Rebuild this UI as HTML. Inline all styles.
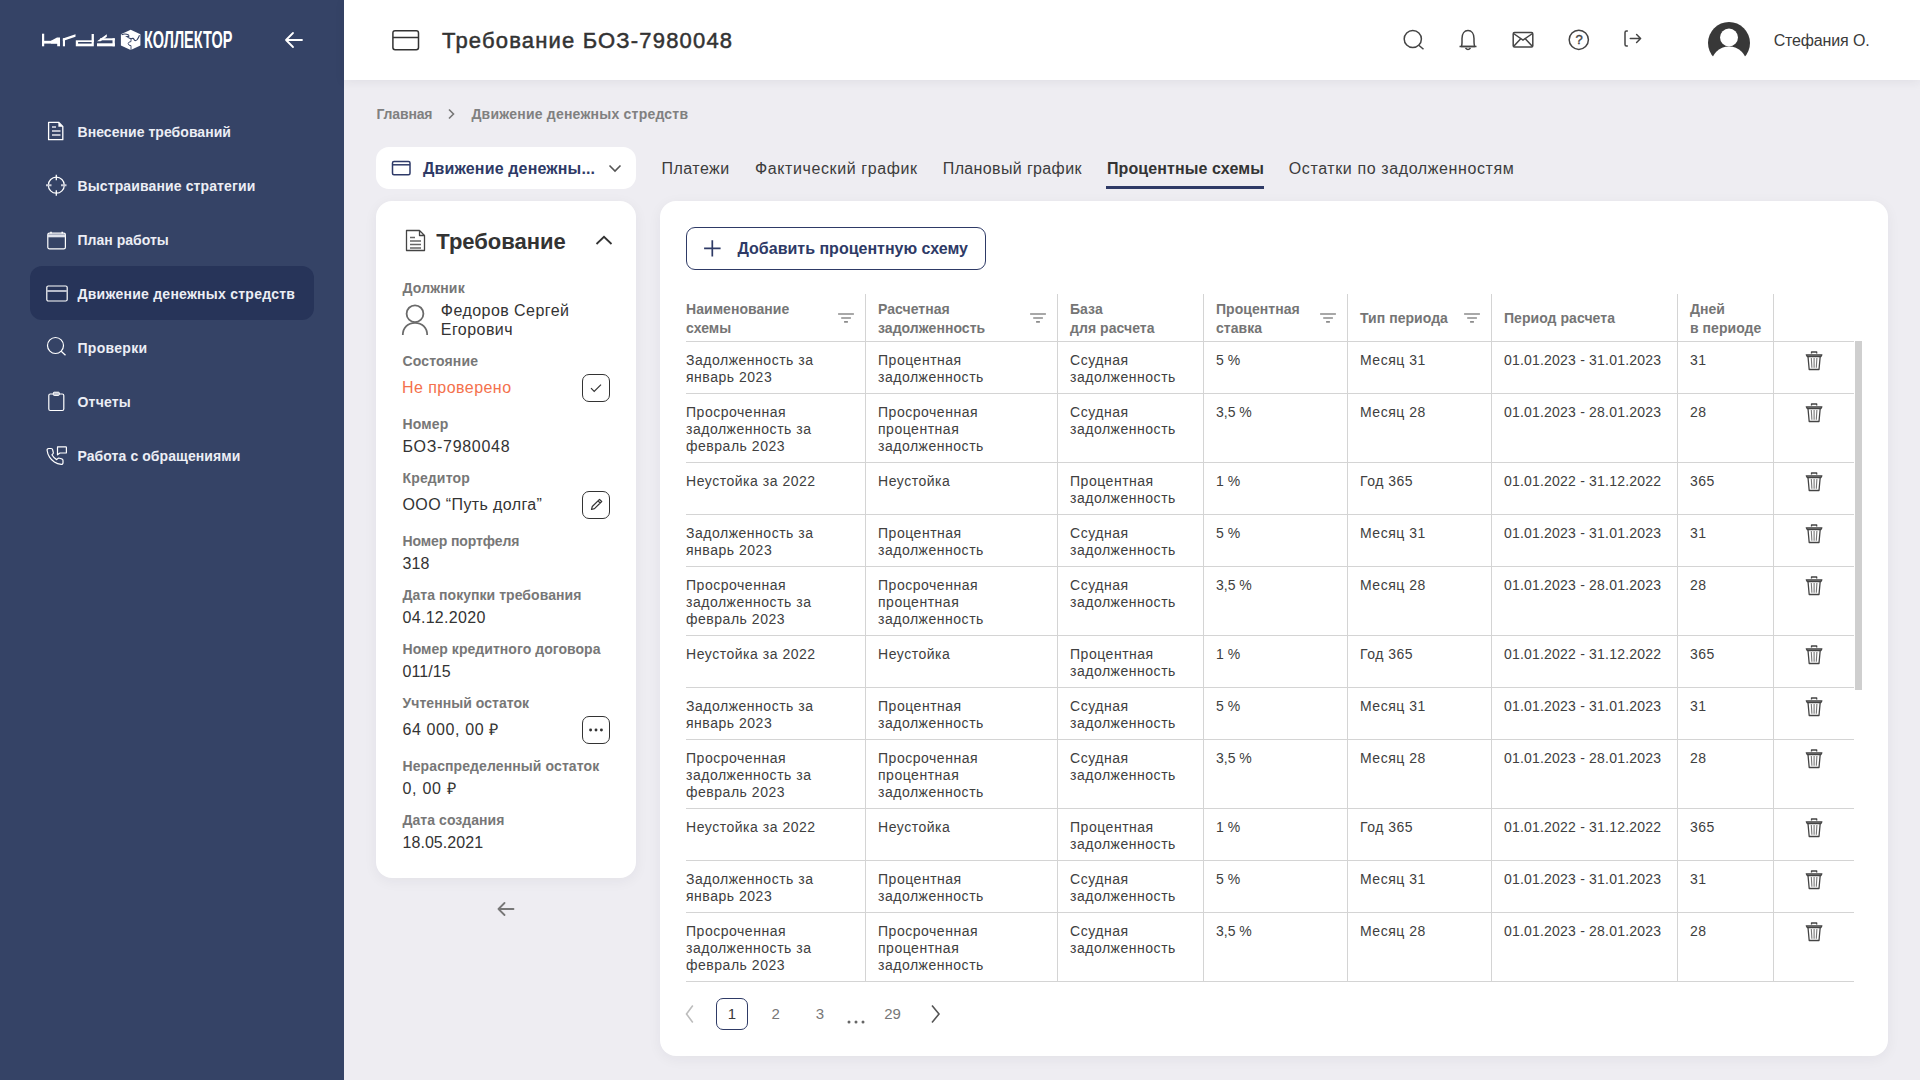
<!DOCTYPE html>
<html><head><meta charset="utf-8"><title>Требование БОЗ-7980048</title>
<style>
html,body{margin:0;padding:0}
body{width:1920px;height:1080px;overflow:hidden;position:relative;background:#EEEDF2;font-family:"Liberation Sans",sans-serif}
.t{position:absolute;white-space:nowrap;line-height:20px}
svg{overflow:visible}
</style></head><body>
<div style="position:absolute;left:0;top:0;width:344px;height:1080px;background:#354366"></div>
<svg style="position:absolute;left:0;top:0" width="344" height="80" viewBox="0 0 344 80">
<g fill="#fff">
<rect x="42" y="33.7" width="2.2" height="12.6"/>
<rect x="44" y="40.8" width="16" height="2.8"/>
<polygon points="51,40.8 57,37.6 60,37.6 60,46.3 57.2,46.3 57.2,43.6 51,43.6"/>
<rect x="62.9" y="38.3" width="2.1" height="8"/>
<polygon points="62.9,38.5 75.5,34.2 75.5,36.8 62.9,41"/>
<rect x="75.8" y="40.3" width="18" height="6"/>
<rect x="91.6" y="34" width="2.3" height="8"/>
<polygon points="97,41.2 106.8,34.3 106.8,36.8 100.5,41.2"/>
<rect x="97" y="43.3" width="17.8" height="3"/>
<rect x="100" y="38.3" width="14.8" height="2"/>
<rect x="112.5" y="38.3" width="2.3" height="8"/>
</g>
<rect x="78.1" y="42" width="13.5" height="1.6" fill="#354366"/>
<g>
<polygon points="130.7,29.8 140.4,34.2 140.4,45.5 130.7,50 120.9,45.5 120.9,34.2" fill="#fff"/>
<path d="M121.6,34.8 Q125,33 128.5,35 Q130,36.8 127,36.6 Q129.2,38.2 131,38.8 Q133.6,37.6 134,39.6 Q135,41.6 137.2,39.6 Q138.6,37.6 139.5,35.2" stroke="#354366" stroke-width="1.1" fill="none"/>
<path d="M131,38.8 V41.6 Q128.6,41.4 128.2,43.6 Q128.4,45.8 131,45.6 V50.5" stroke="#354366" stroke-width="0.9" fill="none"/>
</g>
</svg>
<div class="t" style="left:144px;top:28px;font-size:23px;font-weight:700;color:#fff;line-height:24px;transform:scaleX(0.63);transform-origin:0 0;letter-spacing:0">КОЛЛЕКТОР</div>
<svg style="position:absolute;left:280px;top:26px" width="28" height="28" viewBox="0 0 28 28">
<path d="M6,14 H22 M13,7 L6,14 L13,21" stroke="#fff" stroke-width="1.8" fill="none" stroke-linecap="round" stroke-linejoin="round"/></svg>
<div style="position:absolute;left:30px;top:266px;width:284px;height:54px;border-radius:12px;background:#273459"></div>
<div class="t" style="left:77.5px;top:121.5px;font-size:14px;font-weight:700;color:#ECEEF5;letter-spacing:0.05px;">Внесение требований</div>
<svg style="position:absolute;left:46px;top:116.0px" width="22" height="22" viewBox="0 0 22 22" fill="none" stroke="#fff" stroke-width="1.2" stroke-linejoin="round"><path d="M2.6,6.3 H12.6 L16.8,10.5 V23.7 H2.6 Z" stroke-width="1.3"/><path d="M12.4,6.3 L16.8,10.7 H12.4 Z" fill="#fff" stroke="none"/><path d="M6,11 H10 M6,15 H14.5 M6,18.9 H14.5" stroke="#B8BCCB" stroke-width="2"/></svg>
<div class="t" style="left:77.5px;top:175.5px;font-size:14px;font-weight:700;color:#ECEEF5;letter-spacing:0.12px;">Выстраивание стратегии</div>
<svg style="position:absolute;left:46px;top:174.5px" width="22" height="22" viewBox="0 0 22 22" fill="none" stroke="#fff" stroke-width="1.2" stroke-linejoin="round"><circle cx="10.3" cy="10.2" r="8"/><path d="M10.3,-0.3 V5.2 M10.3,15.2 V20.7" stroke-width="1.3"/><path d="M0,10.2 H5.5 M15,10.2 H20.5" stroke-width="2" stroke="#C9CCD8"/></svg>
<div class="t" style="left:77.5px;top:229.5px;font-size:14px;font-weight:700;color:#ECEEF5;letter-spacing:0.02px;">План работы</div>
<svg style="position:absolute;left:46px;top:229.5px" width="22" height="22" viewBox="0 0 22 22" fill="none" stroke="#fff" stroke-width="1.2" stroke-linejoin="round"><rect x="1.8" y="3.2" width="17.6" height="15.6" rx="1.6"/><path d="M1.8,5.8 H19.4" stroke-width="3" stroke="#E0E3EC"/><path d="M5,1.8 V3.5 M16.2,1.8 V3.5" stroke-width="1.5"/></svg>
<div class="t" style="left:77.5px;top:283.5px;font-size:14px;font-weight:700;color:#ECEEF5;letter-spacing:0.25px;">Движение денежных стредств</div>
<svg style="position:absolute;left:46px;top:284.0px" width="22" height="22" viewBox="0 0 22 22" fill="none" stroke="#fff" stroke-width="1.2" stroke-linejoin="round"><rect x="0.8" y="2" width="20.4" height="15" rx="1.5"/><path d="M0.8,7 H21.2" stroke-width="2" stroke="#B8BCCB"/></svg>
<div class="t" style="left:77.5px;top:337.5px;font-size:14px;font-weight:700;color:#ECEEF5;letter-spacing:0.3px;">Проверки</div>
<svg style="position:absolute;left:46px;top:336.3px" width="22" height="22" viewBox="0 0 22 22" fill="none" stroke="#fff" stroke-width="1.2" stroke-linejoin="round"><circle cx="9.5" cy="9.5" r="8"/><path d="M15.2,15.2 L19.5,19.3"/></svg>
<div class="t" style="left:77.5px;top:391.5px;font-size:14px;font-weight:700;color:#ECEEF5;letter-spacing:0.2px;">Отчеты</div>
<svg style="position:absolute;left:46px;top:389.5px" width="22" height="22" viewBox="0 0 22 22" fill="none" stroke="#fff" stroke-width="1.2" stroke-linejoin="round"><rect x="2.8" y="4" width="15" height="16.5" rx="1.5"/><rect x="7.3" y="2.2" width="6" height="3.2" rx="0.8" fill="#BFC3D0" stroke-width="1"/></svg>
<div class="t" style="left:77.5px;top:445.5px;font-size:14px;font-weight:700;color:#ECEEF5;letter-spacing:0.08px;">Работа с обращениями</div>
<svg style="position:absolute;left:46px;top:443.5px" width="22" height="22" viewBox="0 0 22 22" fill="none" stroke="#fff" stroke-width="1.2" stroke-linejoin="round"><g transform="translate(-0.6,2.9) scale(0.8)"><path stroke-width="1.5" d="M22 16.92v3a2 2 0 0 1-2.18 2 19.79 19.79 0 0 1-8.63-3.07 19.5 19.5 0 0 1-6-6 19.790 19.79 0 0 1-3.07-8.67A2 2 0 0 1 4.110 2h3a2 2 0 0 1 2 1.72 12.84 12.84 0 0 0 .7 2.81 2 2 0 0 1-.45 2.11L8.09 9.91a16 16 0 0 0 6 6l1.270-1.27a2 2 0 0 1 2.11-.45 12.84 12.84 0 0 0 2.81.7A2 2 0 0 1 22 16.92z"/></g><path d="M11.5,2.8 H19.8 Q20.4,2.8 20.4,3.4 V8.4 Q20.4,9 19.8,9 H14 L11.5,10.8 V3.4 Q11.5,2.8 12.1,2.8 Z"/></svg>
<div style="position:absolute;left:344px;top:0;width:1576px;height:80px;background:#fff;box-shadow:0 2px 10px rgba(40,40,60,0.07)"></div>
<svg style="position:absolute;left:390px;top:28px" width="32" height="24" viewBox="0 0 32 24" fill="none" stroke="#333" stroke-width="1.5"><rect x="2.9" y="2.7" width="25.6" height="19" rx="2.2"/><path d="M3,9.5 H28.5"/></svg>
<div class="t" style="left:442px;top:30.799999999999997px;font-size:22px;font-weight:400;color:#333;letter-spacing:1.18px;-webkit-text-stroke:0.5px #333;">Требование БОЗ-7980048</div>
<svg style="position:absolute;left:1395px;top:22px" width="260" height="36" viewBox="1395 22 260 36" fill="none" stroke="#444" stroke-width="1.5">
<circle cx="1412.8" cy="39" r="8.6"/><path d="M1418.8,45.2 L1423.5,49.2"/>
<path d="M1461.3,46.5 C1462.3,45 1462,41 1462,38.5 C1462,33.5 1464.5,30.5 1468,30.5 C1471.5,30.5 1474,33.5 1474,38.5 C1474,41 1473.8,45 1474.8,46.5 Z" stroke-linejoin="round"/>
<path d="M1459.5,46.5 H1476.5"/><path d="M1465.5,48 q2.5,3 5,0"/>
<rect x="1513.2" y="32.6" width="19.6" height="14.4" rx="1.3"/><path d="M1513.5,33.5 L1523,40 L1532.5,33.5 M1513.5,46.5 L1520.5,39 M1532.5,46.5 L1525.5,39"/>
<circle cx="1578.8" cy="39.8" r="9.6"/>
<path d="1576,34 " />
<path d="M1627.3,31 H1626.5 Q1625,31 1625,32.5 V44.6 Q1625,46.1 1626.5,46.1 H1627.3 M1630.3,38.5 H1640.6 M1636.6,34.5 L1640.6,38.5 L1636.6,42.5" stroke-linecap="round" stroke-linejoin="round"/>
</svg>
<div class="t" style="left:1572px;top:30px;width:14px;text-align:center;font-size:13px;font-weight:400;color:#444;line-height:20px;-webkit-text-stroke:0.4px #444">?</div>
<svg style="position:absolute;left:1700px;top:16px" width="60" height="50" viewBox="1700 16 60 50">
<circle cx="1729" cy="43" r="21" fill="#383838"/>
<defs><clipPath id="avb"><rect x="1700" y="16" width="60" height="48"/></clipPath></defs><circle cx="1729" cy="37.5" r="9" fill="#fff"/><circle cx="1729" cy="64.5" r="18" fill="#fff" clip-path="url(#avb)"/>
</svg>
<div class="t" style="left:1773.7px;top:30.5px;font-size:16px;font-weight:400;color:#3a3a3a;letter-spacing:-0.15px;">Стефания О.</div>
<div class="t" style="left:376.5px;top:103.5px;font-size:14px;font-weight:700;color:#808080;letter-spacing:-0.15px;">Главная</div>
<svg style="position:absolute;left:444px;top:106px" width="14" height="16" viewBox="0 0 14 16" fill="none" stroke="#777" stroke-width="1.6"><path d="M5,3.5 L9.5,8 L5,12.5"/></svg>
<div class="t" style="left:471.4px;top:103.5px;font-size:14px;font-weight:700;color:#808080;letter-spacing:0.22px;">Движение денежных стредств</div>
<div style="position:absolute;left:376px;top:147px;width:260px;height:42px;border-radius:13px;background:#fff"></div>
<svg style="position:absolute;left:390px;top:159px" width="24" height="18" viewBox="0 0 24 18" fill="none" stroke="#2E3A68" stroke-width="1.5"><rect x="2.5" y="2.5" width="17.5" height="13.2" rx="1.5"/><path d="M2.5,5.8 H20"/></svg>
<div class="t" style="left:423px;top:159px;font-size:16px;font-weight:700;color:#2E3A66;letter-spacing:0.15px;">Движение денежны...</div>
<svg style="position:absolute;left:606px;top:161px" width="18" height="14" viewBox="0 0 18 14" fill="none" stroke="#555" stroke-width="1.6"><path d="M3.5,4.5 L9,10 L14.5,4.5"/></svg>
<div class="t" style="left:661.6px;top:158.7px;font-size:16px;font-weight:400;color:#3c3c3c;letter-spacing:0.44px;">Платежи</div>
<div class="t" style="left:755px;top:158.7px;font-size:16px;font-weight:400;color:#3c3c3c;letter-spacing:0.6px;">Фактический график</div>
<div class="t" style="left:942.8px;top:158.7px;font-size:16px;font-weight:400;color:#3c3c3c;letter-spacing:0.36px;">Плановый график</div>
<div class="t" style="left:1107px;top:158.7px;font-size:16px;font-weight:700;color:#333;letter-spacing:0.1px;">Процентные схемы</div>
<div class="t" style="left:1288.8px;top:158.7px;font-size:16px;font-weight:400;color:#3c3c3c;letter-spacing:0.6px;">Остатки по задолженностям</div>
<div style="position:absolute;left:1106px;top:185.5px;width:158px;height:3.3px;background:#2E3A66"></div>
<div style="position:absolute;left:376px;top:201px;width:260px;height:677px;border-radius:16px;background:#fff;box-shadow:0 3px 14px rgba(30,30,60,0.055)"></div>
<svg style="position:absolute;left:404px;top:228px" width="24" height="26" viewBox="0 0 24 26" fill="none" stroke="#444" stroke-width="1.3" stroke-linejoin="round"><path d="M2.5,2.5 H15.5 L20.5,7.5 V22.5 H2.5 Z M15.5,2.5 V7.5 H20.5"/><path d="M6,9.5 H11 M6,13 H17 M6,16.5 H17 M6,20 H17" stroke="#666"/></svg>
<div class="t" style="left:436.3px;top:232.2px;font-size:22px;font-weight:700;color:#333;letter-spacing:0px;">Требование</div>
<svg style="position:absolute;left:592px;top:232px" width="24" height="16" viewBox="0 0 24 16" fill="none" stroke="#333" stroke-width="1.8"><path d="M4.5,12 L12,4.8 L19.5,12"/></svg>
<div class="t" style="left:402.5px;top:278.3px;font-size:14px;font-weight:700;color:#777777;letter-spacing:0.15px;">Должник</div>
<svg style="position:absolute;left:400px;top:303px" width="32" height="34" viewBox="0 0 32 34" fill="none" stroke="#6a6a6a" stroke-width="1.8"><circle cx="15" cy="10.7" r="8.4"/><path d="M2.8,32 C2.8,24.5 8,19.8 15,19.8 C22,19.8 27.2,24.5 27.2,32"/></svg>
<div class="t" style="left:440.8px;top:301.2px;font-size:16px;font-weight:400;color:#333;letter-spacing:0.45px;">Федоров Сергей</div>
<div class="t" style="left:440.8px;top:320.2px;font-size:16px;font-weight:400;color:#333;letter-spacing:0.45px;">Егорович</div>
<div class="t" style="left:402.5px;top:351.3px;font-size:14px;font-weight:700;color:#777777;letter-spacing:0.15px;">Состояние</div>
<div class="t" style="left:402px;top:378.3px;font-size:16px;font-weight:400;color:#F4714C;letter-spacing:0.45px;">Не проверено</div>
<div style="position:absolute;left:582px;top:374px;width:26px;height:26px;border:1.2px solid #333;border-radius:7px"></div><svg style="position:absolute;left:582px;top:374px" width="28" height="28" viewBox="0 0 28 28" fill="none" stroke="#333" stroke-width="1.2"><path d="M9,14.2 L12.2,17.4 L19,10.6"/></svg>
<div class="t" style="left:402.5px;top:414.2px;font-size:14px;font-weight:700;color:#777777;letter-spacing:0.15px;">Номер</div>
<div class="t" style="left:402.5px;top:436.7px;font-size:16px;font-weight:400;color:#333;letter-spacing:0.7px;">БОЗ-7980048</div>
<div class="t" style="left:402.5px;top:468px;font-size:14px;font-weight:700;color:#777777;letter-spacing:0.15px;">Кредитор</div>
<div class="t" style="left:402.5px;top:495.3px;font-size:16px;font-weight:400;color:#333;letter-spacing:0.38px;">ООО “Путь долга”</div>
<div style="position:absolute;left:582px;top:491.3px;width:26px;height:26px;border:1.2px solid #333;border-radius:7px"></div><svg style="position:absolute;left:582px;top:491.3px" width="28" height="28" viewBox="0 0 28 28" fill="none" stroke="#333" stroke-width="1.2"><path d="M9.5,18.5 L10.3,15.5 L17.5,8.3 L19.7,10.5 L12.5,17.7 Z M16,9.8 L18.2,12" stroke-linejoin="round"/></svg>
<div class="t" style="left:402.5px;top:531.2px;font-size:14px;font-weight:700;color:#777777;letter-spacing:-0.1px;">Номер портфеля</div>
<div class="t" style="left:402.5px;top:553.7px;font-size:16px;font-weight:400;color:#333;letter-spacing:0.1px;">318</div>
<div class="t" style="left:402.5px;top:585px;font-size:14px;font-weight:700;color:#777777;letter-spacing:0.05px;">Дата покупки требования</div>
<div class="t" style="left:402.5px;top:607.8px;font-size:16px;font-weight:400;color:#333;letter-spacing:0.3px;">04.12.2020</div>
<div class="t" style="left:402.5px;top:638.8px;font-size:14px;font-weight:700;color:#777777;letter-spacing:0.05px;">Номер кредитного договора</div>
<div class="t" style="left:402.5px;top:661.7px;font-size:16px;font-weight:400;color:#333;letter-spacing:0.1px;">011/15</div>
<div class="t" style="left:402.5px;top:693px;font-size:14px;font-weight:700;color:#777777;letter-spacing:0.05px;">Учтенный остаток</div>
<div class="t" style="left:402.5px;top:720px;font-size:16px;font-weight:400;color:#333;letter-spacing:0.6px;">64 000, 00 ₽</div>
<div style="position:absolute;left:582px;top:716.3px;width:26px;height:26px;border:1.2px solid #333;border-radius:7px"></div><svg style="position:absolute;left:582px;top:716.3px" width="28" height="28" viewBox="0 0 28 28" fill="none" stroke="#333" stroke-width="1.2"><circle cx="8.6" cy="14" r="1.45" fill="#333" stroke="none"/><circle cx="14" cy="14" r="1.45" fill="#333" stroke="none"/><circle cx="19.4" cy="14" r="1.45" fill="#333" stroke="none"/></svg>
<div class="t" style="left:402.5px;top:756.2px;font-size:14px;font-weight:700;color:#777777;letter-spacing:0.1px;">Нераспределенный остаток</div>
<div class="t" style="left:402.5px;top:778.7px;font-size:16px;font-weight:400;color:#333;letter-spacing:0.7px;">0, 00 ₽</div>
<div class="t" style="left:402.5px;top:810px;font-size:14px;font-weight:700;color:#777777;letter-spacing:0.05px;">Дата создания</div>
<div class="t" style="left:402.5px;top:832.5px;font-size:16px;font-weight:400;color:#333;letter-spacing:0.05px;">18.05.2021</div>
<svg style="position:absolute;left:494px;top:898px" width="24" height="22" viewBox="0 0 24 22" fill="none" stroke="#777" stroke-width="1.8" stroke-linecap="round" stroke-linejoin="round"><path d="M4.5,11 H19.5 M10.5,5 L4.5,11 L10.5,17"/></svg>
<div style="position:absolute;left:660px;top:201px;width:1228px;height:855px;border-radius:16px;background:#fff;box-shadow:0 3px 14px rgba(30,30,60,0.055)"></div>
<div style="position:absolute;left:686px;top:227px;width:298px;height:40.6px;border:1.4px solid #2E3A66;border-radius:9px"></div>
<svg style="position:absolute;left:702px;top:238px" width="20" height="20" viewBox="0 0 20 20" fill="none" stroke="#2E3A66" stroke-width="1.7"><path d="M10.3,2.3 V18.6 M2.1,10.4 H18.6"/></svg>
<div class="t" style="left:737.5px;top:238.9px;font-size:16px;font-weight:700;color:#2E3A66;letter-spacing:0px;">Добавить процентную схему</div>
<div style="position:absolute;left:865.0px;top:294px;width:1px;height:687.5px;background:#D4D4D4"></div>
<div style="position:absolute;left:1057.0px;top:294px;width:1px;height:687.5px;background:#D4D4D4"></div>
<div style="position:absolute;left:1203.0px;top:294px;width:1px;height:687.5px;background:#D4D4D4"></div>
<div style="position:absolute;left:1347.0px;top:294px;width:1px;height:687.5px;background:#D4D4D4"></div>
<div style="position:absolute;left:1491.0px;top:294px;width:1px;height:687.5px;background:#D4D4D4"></div>
<div style="position:absolute;left:1677.0px;top:294px;width:1px;height:687.5px;background:#D4D4D4"></div>
<div style="position:absolute;left:1773.0px;top:294px;width:1px;height:687.5px;background:#D4D4D4"></div>
<div style="position:absolute;left:686px;top:340.5px;width:1168px;height:1px;background:#D4D4D4"></div>
<div style="position:absolute;left:686px;top:392.5px;width:1168px;height:1px;background:#D4D4D4"></div>
<div style="position:absolute;left:686px;top:461.5px;width:1168px;height:1px;background:#D4D4D4"></div>
<div style="position:absolute;left:686px;top:513.5px;width:1168px;height:1px;background:#D4D4D4"></div>
<div style="position:absolute;left:686px;top:565.5px;width:1168px;height:1px;background:#D4D4D4"></div>
<div style="position:absolute;left:686px;top:634.5px;width:1168px;height:1px;background:#D4D4D4"></div>
<div style="position:absolute;left:686px;top:686.5px;width:1168px;height:1px;background:#D4D4D4"></div>
<div style="position:absolute;left:686px;top:738.5px;width:1168px;height:1px;background:#D4D4D4"></div>
<div style="position:absolute;left:686px;top:807.5px;width:1168px;height:1px;background:#D4D4D4"></div>
<div style="position:absolute;left:686px;top:859.5px;width:1168px;height:1px;background:#D4D4D4"></div>
<div style="position:absolute;left:686px;top:911.5px;width:1168px;height:1px;background:#D4D4D4"></div>
<div style="position:absolute;left:686px;top:980.5px;width:1168px;height:1px;background:#D4D4D4"></div>
<div class="t" style="left:686px;top:298.7px;font-size:14px;font-weight:700;color:#757575;letter-spacing:0.05px;">Наименование</div>
<div class="t" style="left:686px;top:317.9px;font-size:14px;font-weight:700;color:#757575;letter-spacing:0.05px;">схемы</div>
<svg style="position:absolute;left:836.0px;top:310px" width="20" height="16" viewBox="0 0 20 16" fill="none" stroke="#8c8c8c" stroke-width="1.7"><path d="M2.1,4 H17.9 M5.2,8 H14.9 M8.1,11.9 H11.9"/></svg>
<div class="t" style="left:878.0px;top:298.7px;font-size:14px;font-weight:700;color:#757575;letter-spacing:0.05px;">Расчетная</div>
<div class="t" style="left:878.0px;top:317.9px;font-size:14px;font-weight:700;color:#757575;letter-spacing:0.05px;">задолженность</div>
<svg style="position:absolute;left:1028.0px;top:310px" width="20" height="16" viewBox="0 0 20 16" fill="none" stroke="#8c8c8c" stroke-width="1.7"><path d="M2.1,4 H17.9 M5.2,8 H14.9 M8.1,11.9 H11.9"/></svg>
<div class="t" style="left:1070.0px;top:298.7px;font-size:14px;font-weight:700;color:#757575;letter-spacing:0.05px;">База</div>
<div class="t" style="left:1070.0px;top:317.9px;font-size:14px;font-weight:700;color:#757575;letter-spacing:0.05px;">для расчета</div>
<div class="t" style="left:1216.0px;top:298.7px;font-size:14px;font-weight:700;color:#757575;letter-spacing:0.05px;">Процентная</div>
<div class="t" style="left:1216.0px;top:317.9px;font-size:14px;font-weight:700;color:#757575;letter-spacing:0.05px;">ставка</div>
<svg style="position:absolute;left:1318.0px;top:310px" width="20" height="16" viewBox="0 0 20 16" fill="none" stroke="#8c8c8c" stroke-width="1.7"><path d="M2.1,4 H17.9 M5.2,8 H14.9 M8.1,11.9 H11.9"/></svg>
<div class="t" style="left:1360.0px;top:308.3px;font-size:14px;font-weight:700;color:#757575;letter-spacing:0.05px;">Тип периода</div>
<svg style="position:absolute;left:1462.0px;top:310px" width="20" height="16" viewBox="0 0 20 16" fill="none" stroke="#8c8c8c" stroke-width="1.7"><path d="M2.1,4 H17.9 M5.2,8 H14.9 M8.1,11.9 H11.9"/></svg>
<div class="t" style="left:1504.0px;top:308.3px;font-size:14px;font-weight:700;color:#757575;letter-spacing:0.05px;">Период расчета</div>
<div class="t" style="left:1690.0px;top:298.7px;font-size:14px;font-weight:700;color:#757575;letter-spacing:0.05px;">Дней</div>
<div class="t" style="left:1690.0px;top:317.9px;font-size:14px;font-weight:700;color:#757575;letter-spacing:0.05px;">в периоде</div>
<div class="t" style="left:686px;top:350.2px;font-size:14px;font-weight:400;color:#404040;letter-spacing:0.52px;">Задолженность за</div>
<div class="t" style="left:686px;top:367.2px;font-size:14px;font-weight:400;color:#404040;letter-spacing:0.52px;">январь 2023</div>
<div class="t" style="left:878.0px;top:350.2px;font-size:14px;font-weight:400;color:#404040;letter-spacing:0.52px;">Процентная</div>
<div class="t" style="left:878.0px;top:367.2px;font-size:14px;font-weight:400;color:#404040;letter-spacing:0.52px;">задолженность</div>
<div class="t" style="left:1070.0px;top:350.2px;font-size:14px;font-weight:400;color:#404040;letter-spacing:0.52px;">Ссудная</div>
<div class="t" style="left:1070.0px;top:367.2px;font-size:14px;font-weight:400;color:#404040;letter-spacing:0.52px;">задолженность</div>
<div class="t" style="left:1216.0px;top:350.2px;font-size:14px;font-weight:400;color:#404040;letter-spacing:0.0px;">5 %</div>
<div class="t" style="left:1360.0px;top:350.2px;font-size:14px;font-weight:400;color:#404040;letter-spacing:0.52px;">Месяц 31</div>
<div class="t" style="left:1504.0px;top:350.2px;font-size:14px;font-weight:400;color:#404040;letter-spacing:0.2px;">01.01.2023 - 31.01.2023</div>
<div class="t" style="left:1690.0px;top:350.2px;font-size:14px;font-weight:400;color:#404040;letter-spacing:0.52px;">31</div>
<svg style="position:absolute;left:1804px;top:349px" width="20" height="22" viewBox="0 0 20 22" fill="none" stroke="#444" stroke-width="1.3" stroke-linejoin="round"><path d="M7.5,4.5 V3 H12.7 V4.5"/><path d="M2.3,5.8 H17.9 L17,7.5 H3.2 Z" fill="#c4c4c4"/><path d="M4,7.5 L5.2,20.5 H15 L16.2,7.5"/><path d="M7.3,9 L7.9,18.8 M10.1,9 V18.8 M12.9,9 L12.3,18.8" stroke="#777" stroke-width="1.1"/></svg>
<div class="t" style="left:686px;top:402.2px;font-size:14px;font-weight:400;color:#404040;letter-spacing:0.52px;">Просроченная</div>
<div class="t" style="left:686px;top:419.2px;font-size:14px;font-weight:400;color:#404040;letter-spacing:0.52px;">задолженность за</div>
<div class="t" style="left:686px;top:436.2px;font-size:14px;font-weight:400;color:#404040;letter-spacing:0.52px;">февраль 2023</div>
<div class="t" style="left:878.0px;top:402.2px;font-size:14px;font-weight:400;color:#404040;letter-spacing:0.52px;">Просроченная</div>
<div class="t" style="left:878.0px;top:419.2px;font-size:14px;font-weight:400;color:#404040;letter-spacing:0.52px;">процентная</div>
<div class="t" style="left:878.0px;top:436.2px;font-size:14px;font-weight:400;color:#404040;letter-spacing:0.52px;">задолженность</div>
<div class="t" style="left:1070.0px;top:402.2px;font-size:14px;font-weight:400;color:#404040;letter-spacing:0.52px;">Ссудная</div>
<div class="t" style="left:1070.0px;top:419.2px;font-size:14px;font-weight:400;color:#404040;letter-spacing:0.52px;">задолженность</div>
<div class="t" style="left:1216.0px;top:402.2px;font-size:14px;font-weight:400;color:#404040;letter-spacing:0.0px;">3,5 %</div>
<div class="t" style="left:1360.0px;top:402.2px;font-size:14px;font-weight:400;color:#404040;letter-spacing:0.52px;">Месяц 28</div>
<div class="t" style="left:1504.0px;top:402.2px;font-size:14px;font-weight:400;color:#404040;letter-spacing:0.2px;">01.01.2023 - 28.01.2023</div>
<div class="t" style="left:1690.0px;top:402.2px;font-size:14px;font-weight:400;color:#404040;letter-spacing:0.52px;">28</div>
<svg style="position:absolute;left:1804px;top:401px" width="20" height="22" viewBox="0 0 20 22" fill="none" stroke="#444" stroke-width="1.3" stroke-linejoin="round"><path d="M7.5,4.5 V3 H12.7 V4.5"/><path d="M2.3,5.8 H17.9 L17,7.5 H3.2 Z" fill="#c4c4c4"/><path d="M4,7.5 L5.2,20.5 H15 L16.2,7.5"/><path d="M7.3,9 L7.9,18.8 M10.1,9 V18.8 M12.9,9 L12.3,18.8" stroke="#777" stroke-width="1.1"/></svg>
<div class="t" style="left:686px;top:471.2px;font-size:14px;font-weight:400;color:#404040;letter-spacing:0.52px;">Неустойка за 2022</div>
<div class="t" style="left:878.0px;top:471.2px;font-size:14px;font-weight:400;color:#404040;letter-spacing:0.52px;">Неустойка</div>
<div class="t" style="left:1070.0px;top:471.2px;font-size:14px;font-weight:400;color:#404040;letter-spacing:0.52px;">Процентная</div>
<div class="t" style="left:1070.0px;top:488.2px;font-size:14px;font-weight:400;color:#404040;letter-spacing:0.52px;">задолженность</div>
<div class="t" style="left:1216.0px;top:471.2px;font-size:14px;font-weight:400;color:#404040;letter-spacing:0.0px;">1 %</div>
<div class="t" style="left:1360.0px;top:471.2px;font-size:14px;font-weight:400;color:#404040;letter-spacing:0.52px;">Год 365</div>
<div class="t" style="left:1504.0px;top:471.2px;font-size:14px;font-weight:400;color:#404040;letter-spacing:0.2px;">01.01.2022 - 31.12.2022</div>
<div class="t" style="left:1690.0px;top:471.2px;font-size:14px;font-weight:400;color:#404040;letter-spacing:0.52px;">365</div>
<svg style="position:absolute;left:1804px;top:470px" width="20" height="22" viewBox="0 0 20 22" fill="none" stroke="#444" stroke-width="1.3" stroke-linejoin="round"><path d="M7.5,4.5 V3 H12.7 V4.5"/><path d="M2.3,5.8 H17.9 L17,7.5 H3.2 Z" fill="#c4c4c4"/><path d="M4,7.5 L5.2,20.5 H15 L16.2,7.5"/><path d="M7.3,9 L7.9,18.8 M10.1,9 V18.8 M12.9,9 L12.3,18.8" stroke="#777" stroke-width="1.1"/></svg>
<div class="t" style="left:686px;top:523.2px;font-size:14px;font-weight:400;color:#404040;letter-spacing:0.52px;">Задолженность за</div>
<div class="t" style="left:686px;top:540.2px;font-size:14px;font-weight:400;color:#404040;letter-spacing:0.52px;">январь 2023</div>
<div class="t" style="left:878.0px;top:523.2px;font-size:14px;font-weight:400;color:#404040;letter-spacing:0.52px;">Процентная</div>
<div class="t" style="left:878.0px;top:540.2px;font-size:14px;font-weight:400;color:#404040;letter-spacing:0.52px;">задолженность</div>
<div class="t" style="left:1070.0px;top:523.2px;font-size:14px;font-weight:400;color:#404040;letter-spacing:0.52px;">Ссудная</div>
<div class="t" style="left:1070.0px;top:540.2px;font-size:14px;font-weight:400;color:#404040;letter-spacing:0.52px;">задолженность</div>
<div class="t" style="left:1216.0px;top:523.2px;font-size:14px;font-weight:400;color:#404040;letter-spacing:0.0px;">5 %</div>
<div class="t" style="left:1360.0px;top:523.2px;font-size:14px;font-weight:400;color:#404040;letter-spacing:0.52px;">Месяц 31</div>
<div class="t" style="left:1504.0px;top:523.2px;font-size:14px;font-weight:400;color:#404040;letter-spacing:0.2px;">01.01.2023 - 31.01.2023</div>
<div class="t" style="left:1690.0px;top:523.2px;font-size:14px;font-weight:400;color:#404040;letter-spacing:0.52px;">31</div>
<svg style="position:absolute;left:1804px;top:522px" width="20" height="22" viewBox="0 0 20 22" fill="none" stroke="#444" stroke-width="1.3" stroke-linejoin="round"><path d="M7.5,4.5 V3 H12.7 V4.5"/><path d="M2.3,5.8 H17.9 L17,7.5 H3.2 Z" fill="#c4c4c4"/><path d="M4,7.5 L5.2,20.5 H15 L16.2,7.5"/><path d="M7.3,9 L7.9,18.8 M10.1,9 V18.8 M12.9,9 L12.3,18.8" stroke="#777" stroke-width="1.1"/></svg>
<div class="t" style="left:686px;top:575.2px;font-size:14px;font-weight:400;color:#404040;letter-spacing:0.52px;">Просроченная</div>
<div class="t" style="left:686px;top:592.2px;font-size:14px;font-weight:400;color:#404040;letter-spacing:0.52px;">задолженность за</div>
<div class="t" style="left:686px;top:609.2px;font-size:14px;font-weight:400;color:#404040;letter-spacing:0.52px;">февраль 2023</div>
<div class="t" style="left:878.0px;top:575.2px;font-size:14px;font-weight:400;color:#404040;letter-spacing:0.52px;">Просроченная</div>
<div class="t" style="left:878.0px;top:592.2px;font-size:14px;font-weight:400;color:#404040;letter-spacing:0.52px;">процентная</div>
<div class="t" style="left:878.0px;top:609.2px;font-size:14px;font-weight:400;color:#404040;letter-spacing:0.52px;">задолженность</div>
<div class="t" style="left:1070.0px;top:575.2px;font-size:14px;font-weight:400;color:#404040;letter-spacing:0.52px;">Ссудная</div>
<div class="t" style="left:1070.0px;top:592.2px;font-size:14px;font-weight:400;color:#404040;letter-spacing:0.52px;">задолженность</div>
<div class="t" style="left:1216.0px;top:575.2px;font-size:14px;font-weight:400;color:#404040;letter-spacing:0.0px;">3,5 %</div>
<div class="t" style="left:1360.0px;top:575.2px;font-size:14px;font-weight:400;color:#404040;letter-spacing:0.52px;">Месяц 28</div>
<div class="t" style="left:1504.0px;top:575.2px;font-size:14px;font-weight:400;color:#404040;letter-spacing:0.2px;">01.01.2023 - 28.01.2023</div>
<div class="t" style="left:1690.0px;top:575.2px;font-size:14px;font-weight:400;color:#404040;letter-spacing:0.52px;">28</div>
<svg style="position:absolute;left:1804px;top:574px" width="20" height="22" viewBox="0 0 20 22" fill="none" stroke="#444" stroke-width="1.3" stroke-linejoin="round"><path d="M7.5,4.5 V3 H12.7 V4.5"/><path d="M2.3,5.8 H17.9 L17,7.5 H3.2 Z" fill="#c4c4c4"/><path d="M4,7.5 L5.2,20.5 H15 L16.2,7.5"/><path d="M7.3,9 L7.9,18.8 M10.1,9 V18.8 M12.9,9 L12.3,18.8" stroke="#777" stroke-width="1.1"/></svg>
<div class="t" style="left:686px;top:644.2px;font-size:14px;font-weight:400;color:#404040;letter-spacing:0.52px;">Неустойка за 2022</div>
<div class="t" style="left:878.0px;top:644.2px;font-size:14px;font-weight:400;color:#404040;letter-spacing:0.52px;">Неустойка</div>
<div class="t" style="left:1070.0px;top:644.2px;font-size:14px;font-weight:400;color:#404040;letter-spacing:0.52px;">Процентная</div>
<div class="t" style="left:1070.0px;top:661.2px;font-size:14px;font-weight:400;color:#404040;letter-spacing:0.52px;">задолженность</div>
<div class="t" style="left:1216.0px;top:644.2px;font-size:14px;font-weight:400;color:#404040;letter-spacing:0.0px;">1 %</div>
<div class="t" style="left:1360.0px;top:644.2px;font-size:14px;font-weight:400;color:#404040;letter-spacing:0.52px;">Год 365</div>
<div class="t" style="left:1504.0px;top:644.2px;font-size:14px;font-weight:400;color:#404040;letter-spacing:0.2px;">01.01.2022 - 31.12.2022</div>
<div class="t" style="left:1690.0px;top:644.2px;font-size:14px;font-weight:400;color:#404040;letter-spacing:0.52px;">365</div>
<svg style="position:absolute;left:1804px;top:643px" width="20" height="22" viewBox="0 0 20 22" fill="none" stroke="#444" stroke-width="1.3" stroke-linejoin="round"><path d="M7.5,4.5 V3 H12.7 V4.5"/><path d="M2.3,5.8 H17.9 L17,7.5 H3.2 Z" fill="#c4c4c4"/><path d="M4,7.5 L5.2,20.5 H15 L16.2,7.5"/><path d="M7.3,9 L7.9,18.8 M10.1,9 V18.8 M12.9,9 L12.3,18.8" stroke="#777" stroke-width="1.1"/></svg>
<div class="t" style="left:686px;top:696.2px;font-size:14px;font-weight:400;color:#404040;letter-spacing:0.52px;">Задолженность за</div>
<div class="t" style="left:686px;top:713.2px;font-size:14px;font-weight:400;color:#404040;letter-spacing:0.52px;">январь 2023</div>
<div class="t" style="left:878.0px;top:696.2px;font-size:14px;font-weight:400;color:#404040;letter-spacing:0.52px;">Процентная</div>
<div class="t" style="left:878.0px;top:713.2px;font-size:14px;font-weight:400;color:#404040;letter-spacing:0.52px;">задолженность</div>
<div class="t" style="left:1070.0px;top:696.2px;font-size:14px;font-weight:400;color:#404040;letter-spacing:0.52px;">Ссудная</div>
<div class="t" style="left:1070.0px;top:713.2px;font-size:14px;font-weight:400;color:#404040;letter-spacing:0.52px;">задолженность</div>
<div class="t" style="left:1216.0px;top:696.2px;font-size:14px;font-weight:400;color:#404040;letter-spacing:0.0px;">5 %</div>
<div class="t" style="left:1360.0px;top:696.2px;font-size:14px;font-weight:400;color:#404040;letter-spacing:0.52px;">Месяц 31</div>
<div class="t" style="left:1504.0px;top:696.2px;font-size:14px;font-weight:400;color:#404040;letter-spacing:0.2px;">01.01.2023 - 31.01.2023</div>
<div class="t" style="left:1690.0px;top:696.2px;font-size:14px;font-weight:400;color:#404040;letter-spacing:0.52px;">31</div>
<svg style="position:absolute;left:1804px;top:695px" width="20" height="22" viewBox="0 0 20 22" fill="none" stroke="#444" stroke-width="1.3" stroke-linejoin="round"><path d="M7.5,4.5 V3 H12.7 V4.5"/><path d="M2.3,5.8 H17.9 L17,7.5 H3.2 Z" fill="#c4c4c4"/><path d="M4,7.5 L5.2,20.5 H15 L16.2,7.5"/><path d="M7.3,9 L7.9,18.8 M10.1,9 V18.8 M12.9,9 L12.3,18.8" stroke="#777" stroke-width="1.1"/></svg>
<div class="t" style="left:686px;top:748.2px;font-size:14px;font-weight:400;color:#404040;letter-spacing:0.52px;">Просроченная</div>
<div class="t" style="left:686px;top:765.2px;font-size:14px;font-weight:400;color:#404040;letter-spacing:0.52px;">задолженность за</div>
<div class="t" style="left:686px;top:782.2px;font-size:14px;font-weight:400;color:#404040;letter-spacing:0.52px;">февраль 2023</div>
<div class="t" style="left:878.0px;top:748.2px;font-size:14px;font-weight:400;color:#404040;letter-spacing:0.52px;">Просроченная</div>
<div class="t" style="left:878.0px;top:765.2px;font-size:14px;font-weight:400;color:#404040;letter-spacing:0.52px;">процентная</div>
<div class="t" style="left:878.0px;top:782.2px;font-size:14px;font-weight:400;color:#404040;letter-spacing:0.52px;">задолженность</div>
<div class="t" style="left:1070.0px;top:748.2px;font-size:14px;font-weight:400;color:#404040;letter-spacing:0.52px;">Ссудная</div>
<div class="t" style="left:1070.0px;top:765.2px;font-size:14px;font-weight:400;color:#404040;letter-spacing:0.52px;">задолженность</div>
<div class="t" style="left:1216.0px;top:748.2px;font-size:14px;font-weight:400;color:#404040;letter-spacing:0.0px;">3,5 %</div>
<div class="t" style="left:1360.0px;top:748.2px;font-size:14px;font-weight:400;color:#404040;letter-spacing:0.52px;">Месяц 28</div>
<div class="t" style="left:1504.0px;top:748.2px;font-size:14px;font-weight:400;color:#404040;letter-spacing:0.2px;">01.01.2023 - 28.01.2023</div>
<div class="t" style="left:1690.0px;top:748.2px;font-size:14px;font-weight:400;color:#404040;letter-spacing:0.52px;">28</div>
<svg style="position:absolute;left:1804px;top:747px" width="20" height="22" viewBox="0 0 20 22" fill="none" stroke="#444" stroke-width="1.3" stroke-linejoin="round"><path d="M7.5,4.5 V3 H12.7 V4.5"/><path d="M2.3,5.8 H17.9 L17,7.5 H3.2 Z" fill="#c4c4c4"/><path d="M4,7.5 L5.2,20.5 H15 L16.2,7.5"/><path d="M7.3,9 L7.9,18.8 M10.1,9 V18.8 M12.9,9 L12.3,18.8" stroke="#777" stroke-width="1.1"/></svg>
<div class="t" style="left:686px;top:817.2px;font-size:14px;font-weight:400;color:#404040;letter-spacing:0.52px;">Неустойка за 2022</div>
<div class="t" style="left:878.0px;top:817.2px;font-size:14px;font-weight:400;color:#404040;letter-spacing:0.52px;">Неустойка</div>
<div class="t" style="left:1070.0px;top:817.2px;font-size:14px;font-weight:400;color:#404040;letter-spacing:0.52px;">Процентная</div>
<div class="t" style="left:1070.0px;top:834.2px;font-size:14px;font-weight:400;color:#404040;letter-spacing:0.52px;">задолженность</div>
<div class="t" style="left:1216.0px;top:817.2px;font-size:14px;font-weight:400;color:#404040;letter-spacing:0.0px;">1 %</div>
<div class="t" style="left:1360.0px;top:817.2px;font-size:14px;font-weight:400;color:#404040;letter-spacing:0.52px;">Год 365</div>
<div class="t" style="left:1504.0px;top:817.2px;font-size:14px;font-weight:400;color:#404040;letter-spacing:0.2px;">01.01.2022 - 31.12.2022</div>
<div class="t" style="left:1690.0px;top:817.2px;font-size:14px;font-weight:400;color:#404040;letter-spacing:0.52px;">365</div>
<svg style="position:absolute;left:1804px;top:816px" width="20" height="22" viewBox="0 0 20 22" fill="none" stroke="#444" stroke-width="1.3" stroke-linejoin="round"><path d="M7.5,4.5 V3 H12.7 V4.5"/><path d="M2.3,5.8 H17.9 L17,7.5 H3.2 Z" fill="#c4c4c4"/><path d="M4,7.5 L5.2,20.5 H15 L16.2,7.5"/><path d="M7.3,9 L7.9,18.8 M10.1,9 V18.8 M12.9,9 L12.3,18.8" stroke="#777" stroke-width="1.1"/></svg>
<div class="t" style="left:686px;top:869.2px;font-size:14px;font-weight:400;color:#404040;letter-spacing:0.52px;">Задолженность за</div>
<div class="t" style="left:686px;top:886.2px;font-size:14px;font-weight:400;color:#404040;letter-spacing:0.52px;">январь 2023</div>
<div class="t" style="left:878.0px;top:869.2px;font-size:14px;font-weight:400;color:#404040;letter-spacing:0.52px;">Процентная</div>
<div class="t" style="left:878.0px;top:886.2px;font-size:14px;font-weight:400;color:#404040;letter-spacing:0.52px;">задолженность</div>
<div class="t" style="left:1070.0px;top:869.2px;font-size:14px;font-weight:400;color:#404040;letter-spacing:0.52px;">Ссудная</div>
<div class="t" style="left:1070.0px;top:886.2px;font-size:14px;font-weight:400;color:#404040;letter-spacing:0.52px;">задолженность</div>
<div class="t" style="left:1216.0px;top:869.2px;font-size:14px;font-weight:400;color:#404040;letter-spacing:0.0px;">5 %</div>
<div class="t" style="left:1360.0px;top:869.2px;font-size:14px;font-weight:400;color:#404040;letter-spacing:0.52px;">Месяц 31</div>
<div class="t" style="left:1504.0px;top:869.2px;font-size:14px;font-weight:400;color:#404040;letter-spacing:0.2px;">01.01.2023 - 31.01.2023</div>
<div class="t" style="left:1690.0px;top:869.2px;font-size:14px;font-weight:400;color:#404040;letter-spacing:0.52px;">31</div>
<svg style="position:absolute;left:1804px;top:868px" width="20" height="22" viewBox="0 0 20 22" fill="none" stroke="#444" stroke-width="1.3" stroke-linejoin="round"><path d="M7.5,4.5 V3 H12.7 V4.5"/><path d="M2.3,5.8 H17.9 L17,7.5 H3.2 Z" fill="#c4c4c4"/><path d="M4,7.5 L5.2,20.5 H15 L16.2,7.5"/><path d="M7.3,9 L7.9,18.8 M10.1,9 V18.8 M12.9,9 L12.3,18.8" stroke="#777" stroke-width="1.1"/></svg>
<div class="t" style="left:686px;top:921.2px;font-size:14px;font-weight:400;color:#404040;letter-spacing:0.52px;">Просроченная</div>
<div class="t" style="left:686px;top:938.2px;font-size:14px;font-weight:400;color:#404040;letter-spacing:0.52px;">задолженность за</div>
<div class="t" style="left:686px;top:955.2px;font-size:14px;font-weight:400;color:#404040;letter-spacing:0.52px;">февраль 2023</div>
<div class="t" style="left:878.0px;top:921.2px;font-size:14px;font-weight:400;color:#404040;letter-spacing:0.52px;">Просроченная</div>
<div class="t" style="left:878.0px;top:938.2px;font-size:14px;font-weight:400;color:#404040;letter-spacing:0.52px;">процентная</div>
<div class="t" style="left:878.0px;top:955.2px;font-size:14px;font-weight:400;color:#404040;letter-spacing:0.52px;">задолженность</div>
<div class="t" style="left:1070.0px;top:921.2px;font-size:14px;font-weight:400;color:#404040;letter-spacing:0.52px;">Ссудная</div>
<div class="t" style="left:1070.0px;top:938.2px;font-size:14px;font-weight:400;color:#404040;letter-spacing:0.52px;">задолженность</div>
<div class="t" style="left:1216.0px;top:921.2px;font-size:14px;font-weight:400;color:#404040;letter-spacing:0.0px;">3,5 %</div>
<div class="t" style="left:1360.0px;top:921.2px;font-size:14px;font-weight:400;color:#404040;letter-spacing:0.52px;">Месяц 28</div>
<div class="t" style="left:1504.0px;top:921.2px;font-size:14px;font-weight:400;color:#404040;letter-spacing:0.2px;">01.01.2023 - 28.01.2023</div>
<div class="t" style="left:1690.0px;top:921.2px;font-size:14px;font-weight:400;color:#404040;letter-spacing:0.52px;">28</div>
<svg style="position:absolute;left:1804px;top:920px" width="20" height="22" viewBox="0 0 20 22" fill="none" stroke="#444" stroke-width="1.3" stroke-linejoin="round"><path d="M7.5,4.5 V3 H12.7 V4.5"/><path d="M2.3,5.8 H17.9 L17,7.5 H3.2 Z" fill="#c4c4c4"/><path d="M4,7.5 L5.2,20.5 H15 L16.2,7.5"/><path d="M7.3,9 L7.9,18.8 M10.1,9 V18.8 M12.9,9 L12.3,18.8" stroke="#777" stroke-width="1.1"/></svg>
<div style="position:absolute;left:1855px;top:341px;width:7px;height:349px;background:#CFCFCF"></div>
<svg style="position:absolute;left:680px;top:1002px" width="20" height="24" viewBox="0 0 20 24" fill="none" stroke="#BDBDBD" stroke-width="1.6"><path d="M12.8,3.5 L6.5,12 L12.8,20.5"/></svg>
<div style="position:absolute;left:716.3px;top:998.4px;width:29.4px;height:29.6px;border:1.3px solid #2E3A66;border-radius:7px"></div>
<div class="t" style="left:716px;top:1004px;width:32px;text-align:center;font-size:15px;color:#3a3a3a;line-height:20px">1</div>
<div class="t" style="left:759.6px;top:1004px;width:32px;text-align:center;font-size:15px;color:#777;line-height:20px">2</div>
<div class="t" style="left:804px;top:1004px;width:32px;text-align:center;font-size:15px;color:#777;line-height:20px">3</div>
<svg style="position:absolute;left:845px;top:1018px" width="24" height="8" viewBox="0 0 24 8" fill="#666"><circle cx="4" cy="4" r="1.5"/><circle cx="11" cy="4" r="1.5"/><circle cx="18" cy="4" r="1.5"/></svg>
<div class="t" style="left:876.5px;top:1004px;width:32px;text-align:center;font-size:15px;color:#777;line-height:20px">29</div>
<svg style="position:absolute;left:926px;top:1002px" width="20" height="24" viewBox="0 0 20 24" fill="none" stroke="#555" stroke-width="1.6"><path d="M6,3.5 L13,12 L6,20.5"/></svg>
</body></html>
